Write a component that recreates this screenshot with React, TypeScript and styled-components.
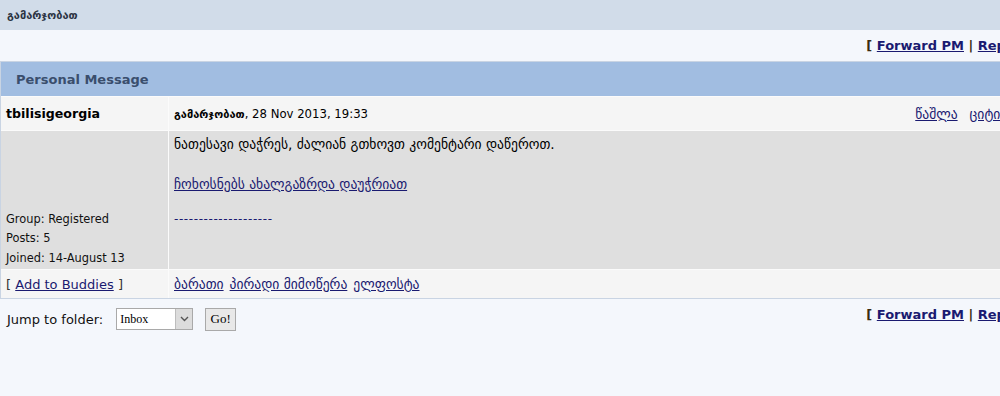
import React from "react";
import styled, { createGlobalStyle } from "styled-components";

const Global = createGlobalStyle`
  html, body { margin: 0; padding: 0; overflow: hidden; }
  body {
    background: #f4f7fc;
    font-family: "DejaVu Sans", Verdana, sans-serif;
    color: #000;
  }
`;

const Page = styled.div`
  width: 1078px;
  min-height: 396px;
`;

const TopBar = styled.div`
  height: 30px;
  background: #d1dce9;
  display: flex;
  align-items: center;
  padding-left: 7px;
`;

const TopTitle = styled.span`
  font-size: 11px;
  font-weight: bold;
  color: #2b3342;
`;

const ActionBar = styled.div`
  height: 31px;
  display: flex;
  align-items: center;
  justify-content: flex-end;
  padding-right: 2px;
`;

const Actions = styled.span`
  font-size: 13px;
  font-weight: bold;
  color: #3a2a10;
  white-space: nowrap;
`;

const Link = styled.a`
  color: #1a1a70;
  text-decoration: underline;
  cursor: pointer;
`;

const Geo = styled.span`
  font-size: 13.6px;
`;

const Table = styled.div`
  display: grid;
  grid-template-columns: 167px 1fr;
  grid-template-rows: 34px 33px 138px 28px;
  gap: 1px;
  background: #fbfbfb;
  border: 1px solid #c9d4e3;
`;

const Header = styled.div`
  grid-column: 1 / span 2;
  background: #a1bde1;
  display: flex;
  align-items: center;
  padding-left: 15px;
  font-size: 13px;
  font-weight: bold;
  color: #3a4e6d;
`;

const Cell = styled.div<{ $tone: "light" | "dark" }>`
  background: ${(p) => (p.$tone === "light" ? "#f5f5f5" : "#dfdfdf")};
  padding: 0 5px;
  font-size: 12px;
  display: flex;
  flex-direction: column;
`;

const MidCell = styled(Cell)`
  justify-content: center;
`;

const NameCell = styled(MidCell)`
  font-size: 12.6px;
  font-weight: bold;
`;

const MetaRow = styled.div`
  display: flex;
  justify-content: space-between;
  align-items: center;
`;

const Author = styled.b`
  font-size: 11px;
`;

const DateText = styled.span`
  font-size: 11.7px;
`;

const PostLinks = styled.span`
  display: flex;
  gap: 12px;
  padding-right: 40px;
`;

const Stats = styled.div`
  margin-top: auto;
  padding-bottom: 1px;
  font-size: 11.4px;
  line-height: 19.5px;
  color: #111;
`;

const Body = styled(Cell)`
  padding-top: 3px;
  line-height: 20px;
`;

const Para = styled.div<{ $gap?: number }>`
  margin-top: ${(p) => p.$gap ?? 0}px;
`;

const Signature = styled.div`
  margin-top: 14px;
  color: #1a1a70;
  font-size: 12px;
  letter-spacing: 0.6px;
`;

const Buddies = styled.span`
  font-size: 13px;
  color: #333;
`;

const ProfileLinks = styled.span`
  display: flex;
  gap: 6px;
`;

const Footer = styled.div`
  display: flex;
  justify-content: space-between;
  align-items: flex-start;
  padding: 8px 2px 0 7px;
`;

const Jump = styled.div`
  display: flex;
  align-items: center;
  font-size: 13px;
  color: #111;
  height: 24px;
`;

const SelectWrap = styled.span`
  position: relative;
  display: inline-block;
  margin-left: 13px;
`;

const Select = styled.select`
  appearance: none;
  width: 77px;
  height: 22px;
  border: 1px solid #a9a9a9;
  background: #fff;
  font-family: "Liberation Serif", serif;
  font-size: 12px;
  padding: 0 0 0 3px;
  margin: 0;
  border-radius: 0;
  color: #000;
`;

const Arrow = styled.span`
  position: absolute;
  right: 1px;
  top: 1px;
  width: 16px;
  height: 20px;
  background: #dcdcdc;
  border-left: 1px solid #bdbdbd;
  display: flex;
  align-items: center;
  justify-content: center;
  pointer-events: none;
`;

const GoButton = styled.button`
  margin-left: 12px;
  width: 31px;
  height: 23px;
  border: 1px solid #a9a9a9;
  background: #e8e8e8;
  font-family: "Liberation Serif", serif;
  font-size: 13px;
  padding: 0;
  border-radius: 0;
  color: #000;
`;

const FooterActions = styled(Actions)`
  margin-top: 0;
`;

const ActionLinks = () => (
  <>
    [ <Link>Forward PM</Link> | <Link>Reply to PM</Link> ]
  </>
);

export default function App() {
  return (
    <Page>
      <Global />
      <TopBar>
        <TopTitle>გამარჯობათ</TopTitle>
      </TopBar>
      <ActionBar>
        <Actions>
          <ActionLinks />
        </Actions>
      </ActionBar>
      <Table>
        <Header>Personal Message</Header>
        <NameCell $tone="light">tbilisigeorgia</NameCell>
        <MidCell $tone="light">
          <MetaRow>
            <span>
              <Author>გამარჯობათ</Author>
              <DateText>, 28 Nov 2013, 19:33</DateText>
            </span>
            <PostLinks>
              <Geo>
                <Link>წაშლა</Link>
              </Geo>
              <Geo>
                <Link>ციტირება</Link>
              </Geo>
            </PostLinks>
          </MetaRow>
        </MidCell>
        <Cell $tone="dark">
          <Stats>
            Group: Registered
            <br />
            Posts: 5
            <br />
            Joined: 14-August 13
          </Stats>
        </Cell>
        <Body $tone="dark">
          <Para>
            <Geo>ნათესავი დაჭრეს, ძალიან გთხოვთ კომენტარი დაწეროთ.</Geo>
          </Para>
          <Para $gap={19}>
            <Geo>
              <Link>ჩოხოსნებს ახალგაზრდა დაუჭრიათ</Link>
            </Geo>
          </Para>
          <Signature>--------------------</Signature>
        </Body>
        <MidCell $tone="light">
          <Buddies>
            [ <Link>Add to Buddies</Link> ]
          </Buddies>
        </MidCell>
        <MidCell $tone="light">
          <ProfileLinks>
            <Geo>
              <Link>ბარათი</Link>
            </Geo>
            <Geo>
              <Link>პირადი მიმოწერა</Link>
            </Geo>
            <Geo>
              <Link>ელფოსტა</Link>
            </Geo>
          </ProfileLinks>
        </MidCell>
      </Table>
      <Footer>
        <Jump>
          Jump to folder:
          <SelectWrap>
            <Select defaultValue="inbox">
              <option value="inbox">Inbox</option>
            </Select>
            <Arrow>
              <svg width="9" height="6" viewBox="0 0 9 6">
                <path d="M1 1 L4.5 4.5 L8 1" fill="none" stroke="#555" strokeWidth="1.4" />
              </svg>
            </Arrow>
          </SelectWrap>
          <GoButton>Go!</GoButton>
        </Jump>
        <FooterActions>
          <ActionLinks />
        </FooterActions>
      </Footer>
    </Page>
  );
}
